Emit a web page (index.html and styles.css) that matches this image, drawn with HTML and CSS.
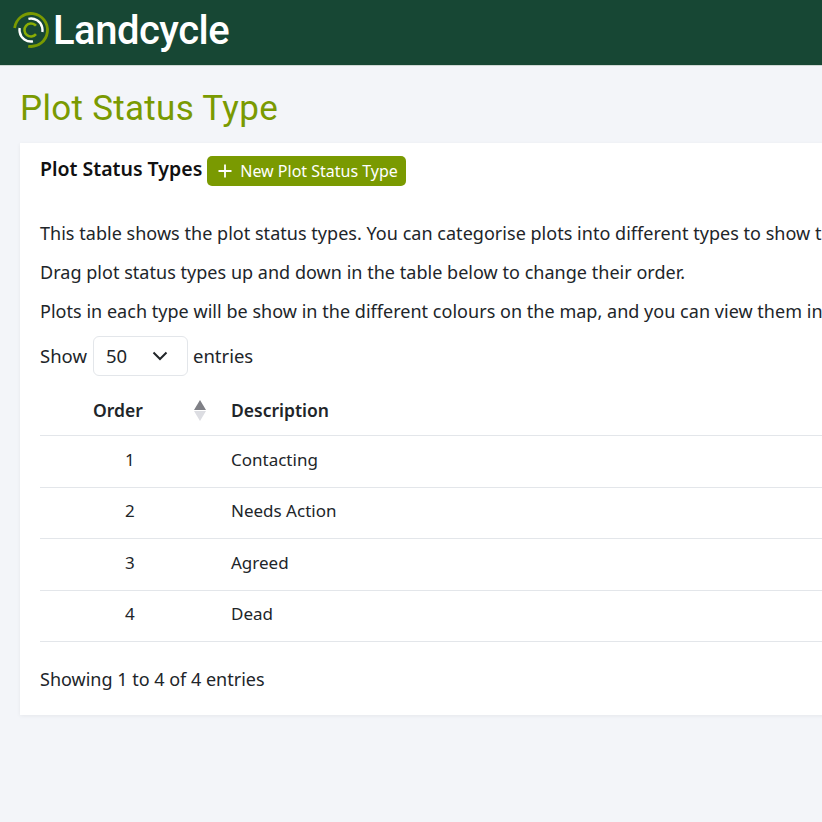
FILE: index.html
```html
<!DOCTYPE html>
<html lang="en">
<head>
<meta charset="utf-8">
<title>Plot Status Type</title>
<link rel="stylesheet" href="styles.css">
</head>
<body>
<header class="topbar">
  <svg class="logo" viewBox="0 0 40 40" width="40" height="40" fill="none">
    <circle cx="20" cy="20" r="16.5" stroke="#7a9a01" stroke-width="2.8" pathLength="360" stroke-dasharray="273 87" transform="rotate(187 20 20)"/>
    <circle cx="20" cy="20" r="11.5" stroke="#fff" stroke-width="2.4" pathLength="360" stroke-dasharray="113 247" transform="rotate(257 20 20)"/>
    <circle cx="20" cy="20" r="11.5" stroke="#fff" stroke-width="2.4" pathLength="360" stroke-dasharray="110 250" transform="rotate(80 20 20)"/>
    <circle cx="20" cy="20" r="6.500" stroke="#8aad05" stroke-width="2.5" pathLength="360" stroke-dasharray="280 80" transform="rotate(40 20 20)"/>
  </svg>
  <span class="brand">Landcycle</span>
</header>
<main class="page">
  <h1 class="title">Plot Status Type</h1>
  <section class="card">
    <div class="card-head">
      <h2 class="card-title">Plot Status Types</h2>
      <a class="btn"><svg class="plus" viewBox="0 0 14 14" width="14" height="14"><path d="M7 .5v13M.5 7h13" stroke="#fff" stroke-width="1.8"/></svg>New Plot Status Type</a>
    </div>
    <p class="line first">This table shows the plot status types. You can categorise plots into different types to show their status on the map and in reports.</p>
    <p class="line">Drag plot status types up and down in the table below to change their order.</p>
    <p class="line">Plots in each type will be show in the different colours on the map, and you can view them in the plots list.</p>
    <div class="length">
      <span class="length-text">Show</span>
      <div class="select"><span>50</span><svg viewBox="0 0 16 10" width="16" height="10" fill="none"><path d="M1.500 1.500 8 8l6.500-6.500" stroke="#212529" stroke-width="2"/></svg></div>
      <span class="length-text">entries</span>
    </div>
    <table class="table">
      <thead>
        <tr>
          <th class="col-order"><div class="th-order"><span>Order</span><span class="sort"><i class="up"></i><i class="down"></i></span></div></th>
          <th>Description</th>
        </tr>
      </thead>
      <tbody>
        <tr><td class="num">1</td><td>Contacting</td></tr>
        <tr><td class="num">2</td><td>Needs Action</td></tr>
        <tr><td class="num">3</td><td>Agreed</td></tr>
        <tr><td class="num">4</td><td>Dead</td></tr>
      </tbody>
    </table>
    <p class="info">Showing 1 to 4 of 4 entries</p>
  </section>
</main>
</body>
</html>
```

FILE: styles.css
```css
html, body { margin: 0; padding: 0; overflow: hidden; }
body {
  width: 822px;
  height: 822px;
  background: #f3f5f9;
  font-family: "Noto Sans", "Open Sans", sans-serif;
  font-size: 18px;
  color: #212529;
}
.topbar {
  height: 65px;
  background: #174734;
  border-bottom: 1px solid #cfd8d4;
  display: flex;
  align-items: center;
  padding-left: 11px;
  gap: 2px;
}
.logo { flex: none; margin-bottom: 5px; }
.brand {
  font-family: "Roboto", sans-serif;
  font-size: 40px;
  font-weight: 500;
  color: #fff;
  letter-spacing: -0.5px;
  margin-bottom: 4px;
}
.page { padding-left: 20px; }
.title {
  margin: 0;
  height: 77px;
  line-height: 86px;
  font-family: "Roboto", sans-serif;
  font-size: 35px;
  font-weight: 400;
  color: #7a9a01;
  letter-spacing: 0.3px;
}
.card {
  width: 900px;
  height: 572px;
  background: #fff;
  box-shadow: 0 1px 4px rgba(0,0,0,.06);
  padding: 13px 0 0 20px;
  box-sizing: border-box;
  overflow: hidden;
}
.card-head { display: flex; align-items: center; gap: 5px; height: 30px; }
.card-title { margin: 0 0 6px; font-size: 19.5px; font-weight: 600; color: #111; }
.btn {
  display: flex;
  align-items: center;
  gap: 8px;
  height: 30px;
  padding: 0 8px 0 11px;
  background: #7a9a01;
  border-radius: 5px;
  color: #fff;
  font-size: 16px;
  white-space: nowrap;
}
.line { margin: 0 0 14px; height: 25px; line-height: 25px; white-space: nowrap; letter-spacing: 0.03px; }
.line.first { margin-top: 35px; }
.length { display: flex; align-items: center; gap: 5px; height: 40px; margin-top: -2px; font-size: 18.5px; }
.length-text { margin-bottom: 2px; }
.select {
  width: 95px;
  height: 40px;
  margin-left: 1px;
  box-sizing: border-box;
  border: 1px solid #e3e6ea;
  border-radius: 6px;
  display: flex;
  align-items: center;
  justify-content: space-between;
  padding: 0 19px 1px 12px;
}
.table { width: 782px; border-collapse: collapse; margin-top: 9px; }
.table th { text-align: left; font-size: 17.5px; font-weight: 600; height: 50px; border-bottom: 1px solid #e3e6ea; padding: 0; }
.table td { height: 46.5px; padding: 0 0 4px; border-bottom: 1px solid #e3e6ea; font-size: 17px; }
.col-order { width: 191px; }
.th-order { display: flex; align-items: center; justify-content: space-between; padding: 0 25px 0 53px; }
.sort { display: flex; flex-direction: column; gap: 1px; }
.sort i { display: block; width: 0; height: 0; border-left: 6px solid transparent; border-right: 6px solid transparent; }
.sort .up { border-bottom: 10px solid #7f8086; }
.sort .down { border-top: 10px solid #dcdde2; }
.table .num { padding-left: 85px; }
.info { margin: 25px 0 0; line-height: 25px; }
```
